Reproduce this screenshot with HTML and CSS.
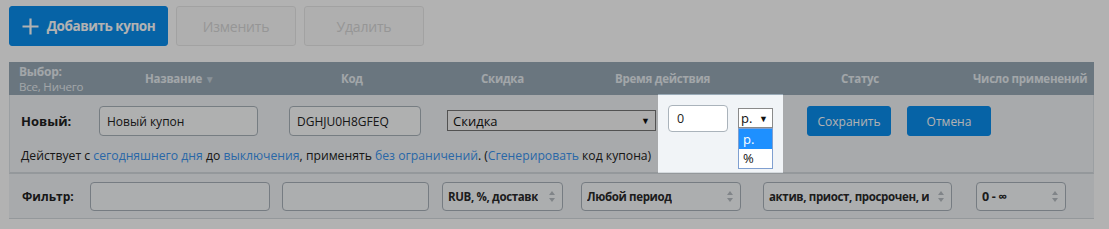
FILE: index.html
```html
<!DOCTYPE html>
<html lang="ru">
<head>
<meta charset="utf-8">
<link rel="stylesheet" href="styles.css">
</head>
<body>
<div class="toolbar">
  <button class="btn btn-primary btn-add"><svg class="plus" width="17" height="17" viewBox="0 0 17 17"><path d="M8.5 0.5V16.5M0.5 8.5H16.5" stroke="#fff" stroke-width="2.2"/></svg>Добавить купон</button>
  <button class="btn btn-disabled">Изменить</button>
  <button class="btn btn-disabled">Удалить</button>
</div>
<div class="grid">
  <div class="head">
    <div class="hc c-sel"><div class="hb">Выбор:</div><div class="hs">Все, Ничего</div></div>
    <div class="hc c-name">Название <span class="sort">▼</span></div>
    <div class="hc c-code">Код</div>
    <div class="hc c-disc">Скидка</div>
    <div class="hc c-time">Время действия</div>
    <div class="hc c-stat">Статус</div>
    <div class="hc c-num">Число применений</div>
  </div>
  <div class="row-new">
    <div class="line1">
      <div class="lbl">Новый:</div>
      <div class="inp inp-name">Новый купон</div>
      <div class="inp inp-code">DGHJU0H8GFEQ</div>
      <div class="nsel nsel-type"><span>Скидка</span><span class="arr">▼</span></div>
      <div class="inp inp-amt">0</div>
      <div class="unit-wrap">
        <div class="nsel nsel-unit"><span>р.</span><span class="arr">▼</span></div>
        <div class="dropdown">
          <div class="opt opt-on">р.</div>
          <div class="opt">%</div>
        </div>
      </div>
      <button class="btn btn-primary btn-save">Сохранить</button>
      <button class="btn btn-primary btn-cancel">Отмена</button>
    </div>
    <div class="line2">Действует с <a>сегодняшнего дня</a> до <a>выключения</a>, применять <a>без ограничений</a>. (<a>Сгенерировать</a> код купона)</div>
  </div>
  <div class="row-filter">
    <div class="lbl flbl">Фильтр:</div>
    <div class="finp f1"></div>
    <div class="finp f2"></div>
    <div class="fsel f3"><span class="ft">RUB, %, доставк</span><span class="ud"></span></div>
    <div class="fsel f4"><span class="ft">Любой период</span><span class="ud"></span></div>
    <div class="fsel f5"><span class="ft">актив, приост, просрочен, и</span><span class="ud"></span></div>
    <div class="fsel f6"><span class="ft">0 - ∞</span><span class="ud"></span></div>
  </div>
</div>
<div class="spotlight"></div>
</body>
</html>
```
FILE: styles.css
```css
* { box-sizing: border-box; }
html, body { margin: 0; padding: 0; }
body {
  background: #fff;
  font-family: "Open Sans", "Noto Sans", sans-serif;
  color: #222;
  width: 1109px;
  height: 229px;
  overflow: hidden;
  position: relative;
}
.toolbar {
  display: flex;
  padding: 6px 0 0 9px;
  height: 46px;
}
.btn {
  font-family: inherit;
  border-radius: 3px;
  border: 1px solid transparent;
  padding: 0;
  display: flex;
  align-items: center;
  justify-content: center;
  cursor: default;
  white-space: nowrap;
}
.btn-primary { background: #0a8eee; color: #fff; border-color: #0a8eee; }
.btn-add {
  width: 159px; height: 40px;
  font-size: 13.5px; font-weight: 700;
  letter-spacing: -0.45px;
}
.plus { margin-right: 8px; }
.btn-disabled {
  width: 120px; height: 40px;
  background: #fbfbfb; border-color: #e9e9e9; color: #d7d7d7;
  font-size: 14px; margin-left: 8px;
  letter-spacing: -0.2px;
}
.grid { margin: 16px 0 0 9px; width: 1085px; }
.head {
  height: 33px;
  background: #99aab7;
  display: flex;
  align-items: center;
  color: #e8eef2;
  font-weight: 700;
  font-size: 11.5px;
  letter-spacing: -0.25px;
  padding-left: 10px;
  white-space: nowrap;
}
.hc { flex: none; }
.c-sel { width: 126px; line-height: 15px; padding-top: 1px; font-size: 12px; }
.c-sel .hs { font-weight: 400; font-size: 11.5px; letter-spacing: -0.2px; }
.c-name { width: 196px; }
.sort { font-size: 10px; color: #c5d2dc; }
.c-code { width: 140px; }
.c-disc { width: 134px; }
.c-time { width: 226px; }
.c-stat { width: 132px; }
.c-num { flex: 1; }
.row-new {
  height: 79px;
  background: #f1f4f7;
  border-left: 1px solid #dfe4e8;
  border-right: 1px solid #dfe4e8;
  border-bottom: 2px solid #d5dade;
}
.line1 {
  display: flex;
  align-items: flex-start;
  padding-top: 11px;
  height: 50px;
}
.lbl { font-weight: 700; font-size: 13px; color: #222; }
.line1 .lbl { margin: 6px 0 0 11px; width: 78px; }
.inp {
  height: 30px;
  border: 1px solid #aab3bb;
  border-radius: 4px;
  background: #fbfcfd;
  font-size: 12px;
  display: flex;
  align-items: center;
  padding-left: 7px;
  color: #222;
}
.inp-name { width: 159px; }
.inp-code { width: 132px; margin-left: 31px; }
.nsel {
  border: 1px solid #767676;
  background: #f8f8f8;
  display: flex;
  align-items: center;
  justify-content: space-between;
  font-size: 13px;
  color: #111;
}
.arr { font-size: 9px; }
.nsel-type { width: 209px; height: 21px; margin: 4px 0 0 26px; padding: 0 5px 0 5px; }
.inp-amt { width: 60px; height: 27px; margin: -1px 0 0 12px; background: #fff; padding-left: 8px; font-size: 12.5px; }
.unit-wrap { position: relative; margin: 2px 0 0 10px; }
.nsel-unit { width: 35px; height: 20px; background: #fff; border-color: #8a8a8a; padding: 0 4px 0 2px; font-size: 13px; }
.dropdown {
  position: absolute;
  left: 0; top: 20px;
  width: 35px;
  background: #fff;
  border: 1px solid #7f9fd0;
  z-index: 20;
}
.opt { height: 19px; line-height: 19px; padding-left: 4px; font-size: 13px; color: #111; }
.opt-on { background: #1e90ff; color: #fff; height: 20px; line-height: 20px; }
.btn-save, .btn-cancel { width: 84px; height: 30px; font-size: 12px; }
.btn-save { margin-left: 34px; }
.btn-cancel { margin-left: 16px; }
.line2 {
  font-size: 12.2px;
  padding-left: 11px;
  color: #222;
  line-height: 16px;
  margin-top: 3px;
}
.line2 a { color: #3b94f0; }
.row-filter {
  height: 45px;
  background: #f1f4f7;
  border-bottom: 1px solid #d5dade;
  display: flex;
  align-items: center;
  padding-top: 1px;
}
.flbl { margin-left: 13px; width: 68px; font-size: 12px; }
.finp, .fsel {
  height: 29px;
  border: 1px solid #a9b2ba;
  border-radius: 4px;
  background: #f7f9fb;
  flex: none;
}
.f1 { width: 180px; }
.f2 { width: 147px; margin-left: 12px; }
.fsel {
  display: flex;
  align-items: center;
  justify-content: space-between;
  padding: 0 6px 0 5px;
  font-size: 11.5px;
  font-weight: 700;
  letter-spacing: -0.35px;
  color: #2a2a2a;
  white-space: nowrap;
  overflow: hidden;
}
.f3 { width: 121px; margin-left: 13px; }
.f4 { width: 160px; margin-left: 18px; }
.f5 { width: 189px; margin-left: 22px; }
.f6 { width: 90px; margin-left: 24px; }
.f6 .ft { font-size: 12.5px; }
.ft { overflow: hidden; }
.ud {
  flex: none;
  width: 7px; height: 11px;
  position: relative;
  margin-left: 4px;
}
.ud::before, .ud::after {
  content: "";
  position: absolute;
  left: 0;
  border-left: 3.5px solid transparent;
  border-right: 3.5px solid transparent;
}
.ud::before { top: 0; border-bottom: 4px solid #b8bec3; }
.ud::after { bottom: 0; border-top: 4px solid #b8bec3; }
.spotlight {
  position: absolute;
  left: 658px; top: 94px;
  width: 125px; height: 79px;
  box-shadow: 0 0 0 3000px rgba(0, 0, 0, 0.3);
  z-index: 10;
  pointer-events: none;
}
```
